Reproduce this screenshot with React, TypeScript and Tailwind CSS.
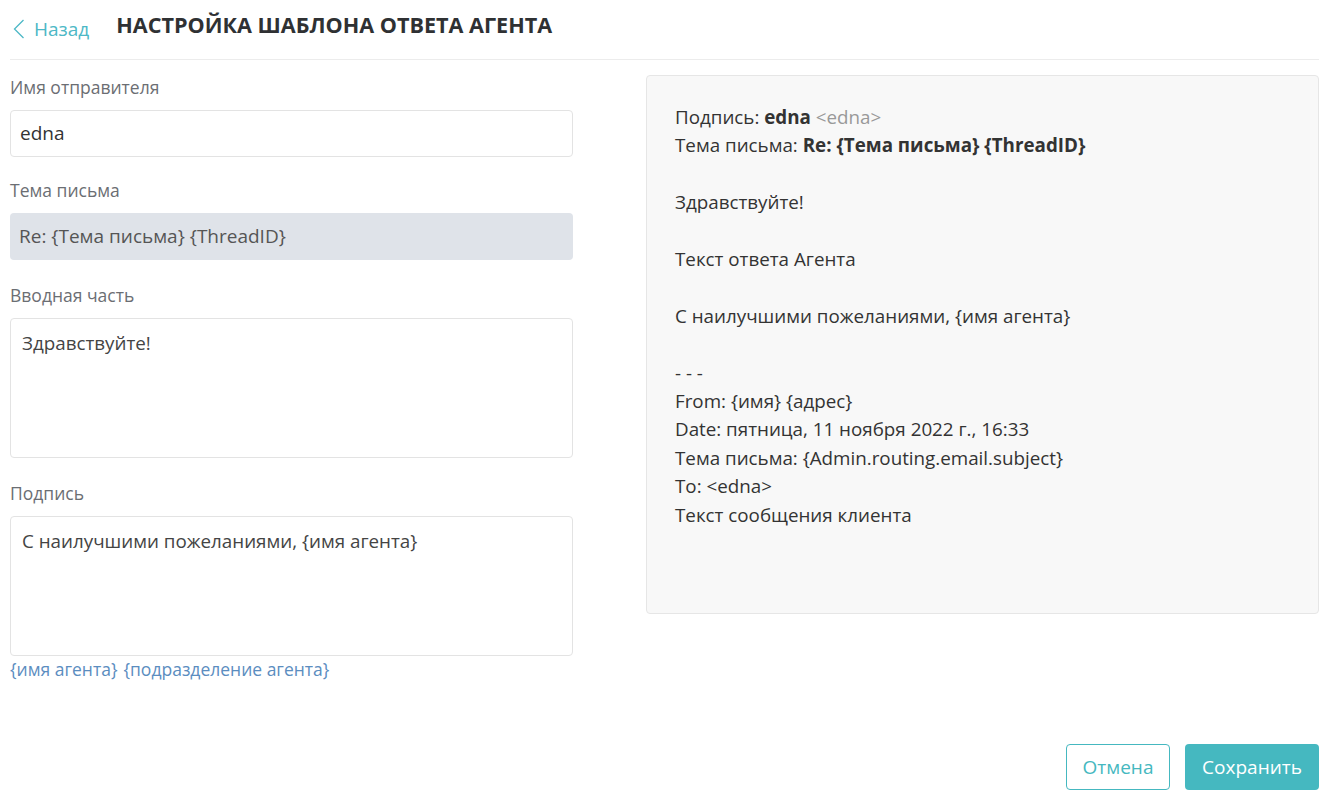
const font = { fontFamily: '"Open Sans", "Noto Sans", sans-serif' };

function Label({ children }: { children: React.ReactNode }) {
	return <div className="text-[17.5px] leading-[24px] text-[#6b6e73] mb-[11px]">{children}</div>;
}

export default function App() {
	return (
		<div className="min-h-[800px] bg-white text-[#333] flex flex-col pl-[10px] pr-[20px]" style={font}>
			{/* Header */}
			<div className="flex items-center h-[60px] border-b border-[#ececec]">
				<a className="flex items-center text-[#4db8c6] text-[19px]">
					<svg width="12" height="20" viewBox="0 0 12 20" fill="none" className="ml-[3px] mt-[-2px]">
						<path d="M10.5 1 L1.5 10 L10.5 19" stroke="currentColor" strokeWidth="1.3" />
					</svg>
					<span className="ml-[9px]">Назад</span>
				</a>
				<h1 className="ml-[27px] text-[21.6px] font-bold text-[#2f3133] -mt-[9px]">
					НАСТРОЙКА ШАБЛОНА ОТВЕТА АГЕНТА
				</h1>
			</div>

			<div className="flex gap-[73px] mt-[15px]">
				{/* Form */}
				<div className="w-[563px] shrink-0">
					<Label>Имя отправителя</Label>
					<div className="h-[47px] border border-[#e3e3e3] rounded-[4px] px-[9px] flex items-center text-[19px] text-[#333]">edna</div>

					<div className="mt-[21px]">
						<Label>Тема письма</Label>
					</div>
					<div className="h-[47px] bg-[#dfe3e9] rounded-[4px] px-[9px] flex items-center text-[19px] text-[#555]">
						Re: {"{Тема письма}"} {"{ThreadID}"}
					</div>

					<div className="mt-[23px]">
						<Label>Вводная часть</Label>
					</div>
					<div className="h-[140px] border border-[#e3e3e3] rounded-[4px] px-[11px] pt-[10px] text-[18.8px] text-[#444]">Здравствуйте!</div>

					<div className="mt-[23px]">
						<Label>Подпись</Label>
					</div>
					<div className="h-[140px] border border-[#e3e3e3] rounded-[4px] px-[11px] pt-[10px] text-[18.8px] text-[#444]">
						С наилучшими пожеланиями, {"{имя агента}"}
					</div>
					<div className="flex gap-[6px] text-[17.5px] leading-[26px] text-[#5b8dbf]">
						<span>{"{имя агента}"}</span>
						<span>{"{подразделение агента}"}</span>
					</div>
				</div>

				{/* Preview */}
				<div className="flex-1 h-[539px] bg-[#f8f8f8] border border-[#e6e6e6] rounded-[4px] pl-[28px] pt-[27px] text-[18.8px] leading-[28.4px] text-[#333]">
					<div>
						Подпись: <b>edna</b> <span className="text-[#999]">&lt;edna&gt;</span>
					</div>
					<div>
						Тема письма: <b>Re: {"{Тема письма}"} {"{ThreadID}"}</b>
					</div>
					<div>&nbsp;</div>
					<div>Здравствуйте!</div>
					<div>&nbsp;</div>
					<div>Текст ответа Агента</div>
					<div>&nbsp;</div>
					<div>С наилучшими пожеланиями, {"{имя агента}"}</div>
					<div>&nbsp;</div>
					<div>- - -</div>
					<div>From: {"{имя}"} {"{адрес}"}</div>
					<div>Date: пятница, 11 ноября 2022 г., 16:33</div>
					<div>Тема письма: {"{Admin.routing.email.subject}"}</div>
					<div>To: &lt;edna&gt;</div>
					<div>Текст сообщения клиента</div>
				</div>
			</div>

			{/* Footer */}
			<div className="flex justify-end gap-[15px] mt-auto mb-[10px]">
				<button className="h-[46px] w-[104px] border border-[#45b8c0] rounded-[4px] text-[#45b8c0] text-[19px] bg-white">Отмена</button>
				<button className="h-[46px] w-[134px] rounded-[4px] bg-[#45b8c0] text-white text-[19px]">Сохранить</button>
			</div>
		</div>
	);
}
